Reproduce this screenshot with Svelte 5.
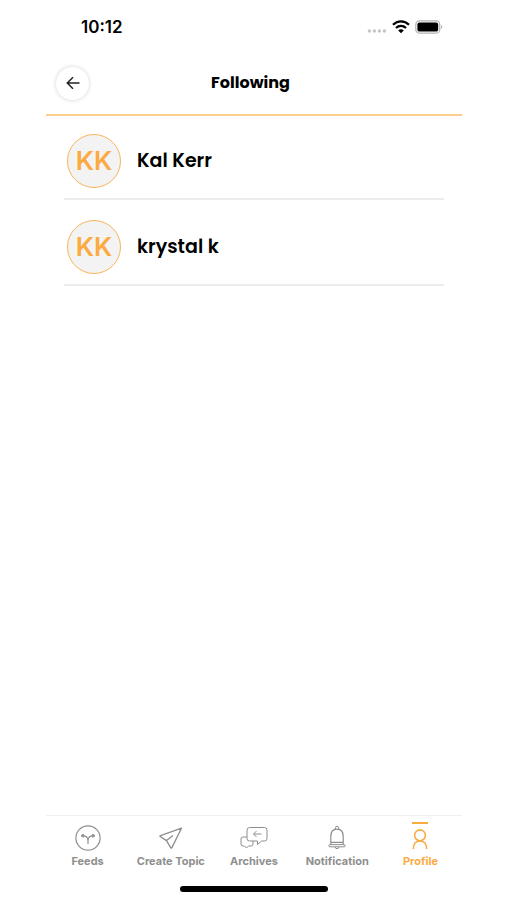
<script>
  const people = [
    { name: 'Kal Kerr', initials: 'KK' },
    { name: 'krystal k', initials: 'KK' }
  ];

  const tabs = [
    { id: 'feeds', label: 'Feeds' },
    { id: 'create', label: 'Create Topic' },
    { id: 'archives', label: 'Archives' },
    { id: 'notification', label: 'Notification' },
    { id: 'profile', label: 'Profile' }
  ];

  let active = $state('profile');
</script>

<div class="screen">
  <div class="status">
    <span class="time">10:12</span>
    <div class="indicators">
      <svg class="signal" width="20" height="16" viewBox="0 0 20 16" fill="#c4c4c4">
        <circle cx="2.4" cy="12" r="1.7" />
        <circle cx="7.4" cy="12" r="1.7" />
        <circle cx="12.4" cy="12" r="1.7" />
        <circle cx="17.4" cy="12" r="1.7" />
      </svg>
      <svg width="18" height="16" viewBox="0 0 18 16" fill="none" stroke="#000" stroke-width="2.3">
        <path d="M1 5.8C5.5 1.2 12.5 1.2 17 5.8" />
        <path d="M4 9C6.9 6.2 11.1 6.2 14 9" />
        <path d="M9 14.2L6.2 11.4C7.8 10 10.2 10 11.8 11.4Z" fill="#000" stroke="none" />
      </svg>
      <svg width="28" height="16" viewBox="0 0 28 16">
        <rect x="0.8" y="1.8" width="24" height="12.4" rx="3.8" fill="#fff" stroke="#b4b4b4" stroke-width="1.2" />
        <rect x="2.4" y="3.4" width="20.8" height="9.2" rx="2.2" fill="#000" />
        <path d="M26 6C27.6 6.6 27.6 9.4 26 10Z" fill="#b4b4b4" />
      </svg>
    </div>
  </div>

  <header>
    <button class="back" aria-label="Back">
      <svg width="14" height="14" viewBox="0 0 14 14" fill="none" stroke="#222" stroke-width="1.5">
        <path d="M13.5 7H1.5M7 1.2L1.3 7L7 12.8" />
      </svg>
    </button>
    <h1>Following</h1>
  </header>

  <main>
    <ul>
      {#each people as person}
        <li>
          <span class="avatar">{person.initials}</span>
          <span class="name">{person.name}</span>
        </li>
      {/each}
    </ul>
  </main>

  <nav>
    {#each tabs as tab}
      <button class="tab" class:active={active === tab.id} onclick={() => (active = tab.id)}>
        <svg width="28" height="28" viewBox="0 0 28 28" fill="none" stroke="currentColor" stroke-linejoin="round">
          {#if tab.id === 'feeds'}
            <circle cx="14" cy="14" r="12.1" stroke-width="1.2" />
            <path d="M14 20V16.5C14 13 11.5 11.7 7.5 11.7M14 16.5C14 13 16.5 11.7 20.5 11.7" stroke-width="1.2" />
            <path d="M9.3 10.2L7 11.7L9.3 13.2ZM18.7 10.2L21 11.7L18.7 13.2Z" fill="currentColor" />
          {:else if tab.id === 'create'}
            <path d="M24.5 4.2L3.5 11.6Q2.4 12.1 3.5 12.8L9.5 16.6L13.8 23.8Q14.4 24.6 14.9 23.6ZM9.5 16.6L16 11.6" stroke-width="1.3" />
          {:else if tab.id === 'archives'}
            <path d="M9.5 3.5H24.5Q27 3.5 27 6V14.5Q27 17 24.5 17H21.5L17.5 20.5V17H9.5Q7 17 7 14.5V6Q7 3.5 9.5 3.5Z" />
            <path d="M7 13H3Q1 13 1 15V20Q1 22 3 22H4.5L6.5 24L8.5 22H11Q13 22 13 20V17" />
            <path d="M21.5 10H13.5M16.5 7L13.5 10L16.5 13" />
          {:else if tab.id === 'notification'}
            <path d="M7.8 21V12.2C7.8 7.6 10 5.1 14 5.1C18 5.1 20.2 7.6 20.2 12.2V21M7.8 18.4H20.2" stroke-width="1.2" />
            <path d="M12.4 5.2V3.6Q12.4 2.4 14 2.4Q15.6 2.4 15.6 3.6V5.2" />
            <path d="M6.8 20.6H21.2Q22.2 20.6 22.2 21.7T21.2 22.8H6.8Q5.8 22.8 5.8 21.7T6.8 20.6ZM12 22.8Q12.3 24.7 14 24.7T16 22.8" />
          {:else}
            <circle cx="14" cy="11.3" r="5.4" stroke-width="1.6" />
            <path d="M7.3 25C7.3 20 10 17 14 17S20.7 20 20.7 25" stroke-width="1.6" />
          {/if}
        </svg>
        <span>{tab.label}</span>
      </button>
    {/each}
  </nav>

  <div class="home"><span></span></div>
</div>

<style>
  :global(body) {
    background: #fff;
  }

  .screen {
    display: flex;
    flex-direction: column;
    min-height: 100vh;
    box-sizing: border-box;
    padding: 0 45px 0 46px;
    background: #fff;
    color: #000;
    font-family: Poppins, Inter, sans-serif;
  }

  .status {
    display: flex;
    align-items: center;
    justify-content: space-between;
    height: 50px;
    padding: 4px 19px 0 35px;
    box-sizing: border-box;
  }

  .time {
    font: 600 17px/20px Inter, sans-serif;
  }

  .indicators {
    display: flex;
    align-items: center;
    gap: 5px;
  }

  .signal {
    align-self: flex-end;
  }

  header {
    display: grid;
    grid-template-columns: 36px 1fr 44px;
    align-items: center;
    height: 66px;
    padding: 2px 9px 0 10px;
    box-sizing: border-box;
    border-bottom: 2px solid #fdcd90;
  }

  .back {
    display: flex;
    align-items: center;
    justify-content: center;
    width: 33px;
    height: 33px;
    padding: 0;
    border: 0;
    border-radius: 50%;
    background: #fff;
    box-shadow: 0 0 4px rgba(0, 0, 0, 0.18);
    cursor: pointer;
  }

  h1 {
    margin: 0;
    text-align: center;
    font-size: 16px;
    line-height: 24px;
    font-weight: 700;
  }

  main {
    flex: 1;
  }

  ul {
    display: flex;
    flex-direction: column;
    gap: 2px;
    margin: 0 18px;
    padding: 0;
    list-style: none;
  }

  li {
    display: flex;
    align-items: center;
    gap: 16px;
    padding: 18px 0 10px 3px;
    border-bottom: 2px solid #ececec;
  }

  .avatar {
    display: flex;
    align-items: center;
    justify-content: center;
    width: 54px;
    height: 54px;
    box-sizing: border-box;
    border: 1px solid #fbb45c;
    border-radius: 50%;
    background: #f3f3f3;
    color: #fbab42;
    font: 600 26px/32px Inter, sans-serif;
  }

  .name {
    font-size: 19px;
    line-height: 28px;
    font-weight: 600;
  }

  nav {
    display: flex;
    border-top: 1px solid #f0f0f0;
  }

  .tab {
    position: relative;
    flex: 1 1 0;
    display: flex;
    flex-direction: column;
    align-items: center;
    gap: 2px;
    min-width: 0;
    padding: 8px 0 18px;
    border: 0;
    background: none;
    color: #8e8e8e;
    font: 700 11px/14px Inter, sans-serif;
    white-space: nowrap;
    cursor: pointer;
  }

  .active {
    color: #fbab42;
  }

  .active::before {
    content: '';
    position: absolute;
    top: 6px;
    width: 16px;
    height: 2px;
    background: #fbab42;
  }

  .home {
    display: flex;
    justify-content: center;
    padding-bottom: 8px;
  }

  .home span {
    width: 148px;
    height: 6px;
    border-radius: 3px;
    background: #000;
  }
</style>
